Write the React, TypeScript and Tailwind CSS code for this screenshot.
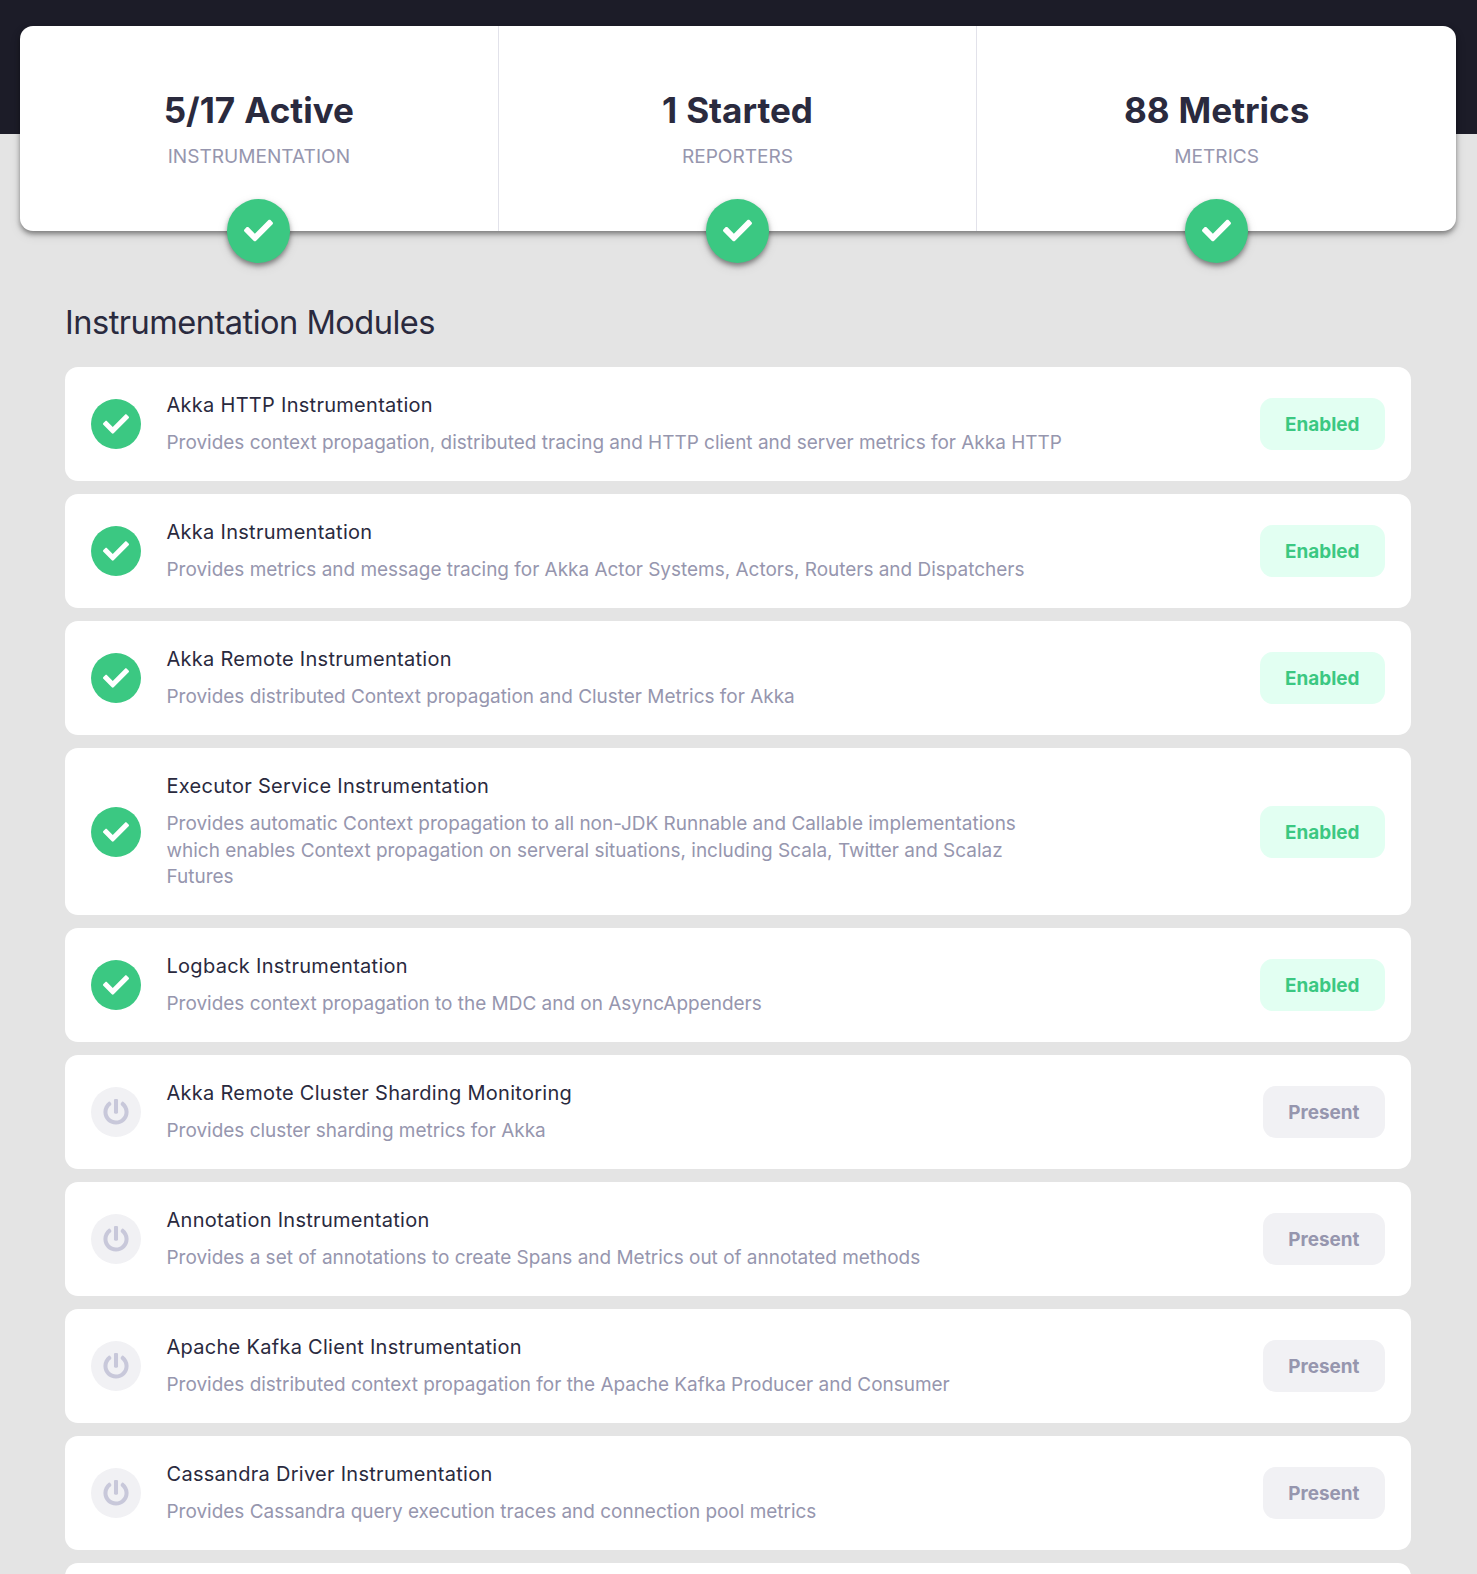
import { FaCheck, FaPowerOff } from "react-icons/fa";

const stats = [
  { value: "5/17 Active", label: "Instrumentation" },
  { value: "1 Started", label: "Reporters" },
  { value: "88 Metrics", label: "Metrics" },
];

type Module = { name: string; description: string; enabled: boolean };

const modules: Module[] = [
  {
    name: "Akka HTTP Instrumentation",
    description:
      "Provides context propagation, distributed tracing and HTTP client and server metrics for Akka HTTP",
    enabled: true,
  },
  {
    name: "Akka Instrumentation",
    description: "Provides metrics and message tracing for Akka Actor Systems, Actors, Routers and Dispatchers",
    enabled: true,
  },
  {
    name: "Akka Remote Instrumentation",
    description: "Provides distributed Context propagation and Cluster Metrics for Akka",
    enabled: true,
  },
  {
    name: "Executor Service Instrumentation",
    description:
      "Provides automatic Context propagation to all non-JDK Runnable and Callable implementations which enables Context propagation on serveral situations, including Scala, Twitter and Scalaz Futures",
    enabled: true,
  },
  {
    name: "Logback Instrumentation",
    description: "Provides context propagation to the MDC and on AsyncAppenders",
    enabled: true,
  },
  {
    name: "Akka Remote Cluster Sharding Monitoring",
    description: "Provides cluster sharding metrics for Akka",
    enabled: false,
  },
  {
    name: "Annotation Instrumentation",
    description: "Provides a set of annotations to create Spans and Metrics out of annotated methods",
    enabled: false,
  },
  {
    name: "Apache Kafka Client Instrumentation",
    description: "Provides distributed context propagation for the Apache Kafka Producer and Consumer",
    enabled: false,
  },
  {
    name: "Cassandra Driver Instrumentation",
    description: "Provides Cassandra query execution traces and connection pool metrics",
    enabled: false,
  },
];

function StatCard({ value, label }: { value: string; label: string }) {
  return (
    <div className="relative flex flex-col items-center border-r border-[#e2e2ea] pt-[61px] last:border-r-0">
      <div className="text-[35.1px] leading-[46px] font-bold text-[#2a2a3e] [word-spacing:0.7px]">{value}</div>
      <div className="mt-2.5 text-[19.1px] leading-[26px] text-[#9696ae] uppercase">{label}</div>
      <div className="absolute -bottom-8 left-[207.4px] flex h-16 w-[63px] items-center justify-center rounded-full bg-[#3bc882] text-white shadow-[0_3px_5px_rgba(0,0,0,0.4),0_4px_12px_rgba(0,0,0,0.1)]">
        <FaCheck className="-mt-0.5 size-[29px]" />
      </div>
    </div>
  );
}

function ModuleCard({ name, description, enabled }: Module) {
  return (
    <div className="flex items-center rounded-[13px] bg-white px-[26px] py-[25px]">
      <div
        className={
          enabled
            ? "flex size-[50px] shrink-0 items-center justify-center rounded-full bg-[#3bc882] text-white"
            : "flex size-[50px] shrink-0 items-center justify-center rounded-full bg-[#f1f1f4] text-[#c8c8da]"
        }
      >
        {enabled ? <FaCheck className="size-[26px]" /> : <FaPowerOff className="size-[26px]" />}
      </div>
      <div className="-mb-[0.5px] ml-[25.5px] w-[901px] pt-px">
        <div className="text-[20px] leading-[25px] tracking-[0.014em] text-[#2a2a3e]">{name}</div>
        <div className="mt-3 text-[18.97px] leading-[26.5px] text-[#9696ae]">{description}</div>
      </div>
      <div
        className={
          enabled
            ? "ml-auto rounded-[13px] bg-[#e2fff2] px-[25.5px] pt-0.5 text-[18.9px] leading-[50px] font-bold text-[#3bc882]"
            : "ml-auto rounded-[13px] bg-[#f1f1f4] px-[25.5px] pt-0.5 text-[18.9px] leading-[50px] font-bold text-[#9696ae]"
        }
      >
        {enabled ? "Enabled" : "Present"}
      </div>
    </div>
  );
}

export default function App() {
  return (
    <div className="h-[1574px] overflow-hidden bg-[#e4e4e4] font-['Inter',sans-serif]">
      <header className="h-[134px] bg-[#1c1c28] pt-[26px] pr-[21px] pl-5">
        <div className="grid h-[205px] grid-cols-3 rounded-[13px] bg-white shadow-[0_3px_5px_rgba(0,0,0,0.4),0_4px_12px_rgba(0,0,0,0.1)]">
          {stats.map((s) => (
            <StatCard key={s.label} {...s} />
          ))}
        </div>
      </header>
      <main className="pt-[167px] pr-[66px] pl-[65px]">
        <h1 className="text-[32.6px] leading-[42px] tracking-[-0.016em] text-[#2a2a3e]">Instrumentation Modules</h1>
        <div className="mt-6 flex flex-col gap-[13px]">
          {modules.map((m) => (
            <ModuleCard key={m.name} {...m} />
          ))}
          <div className="h-[114px] shrink-0 rounded-[13px] bg-white" />
        </div>
      </main>
    </div>
  );
}
